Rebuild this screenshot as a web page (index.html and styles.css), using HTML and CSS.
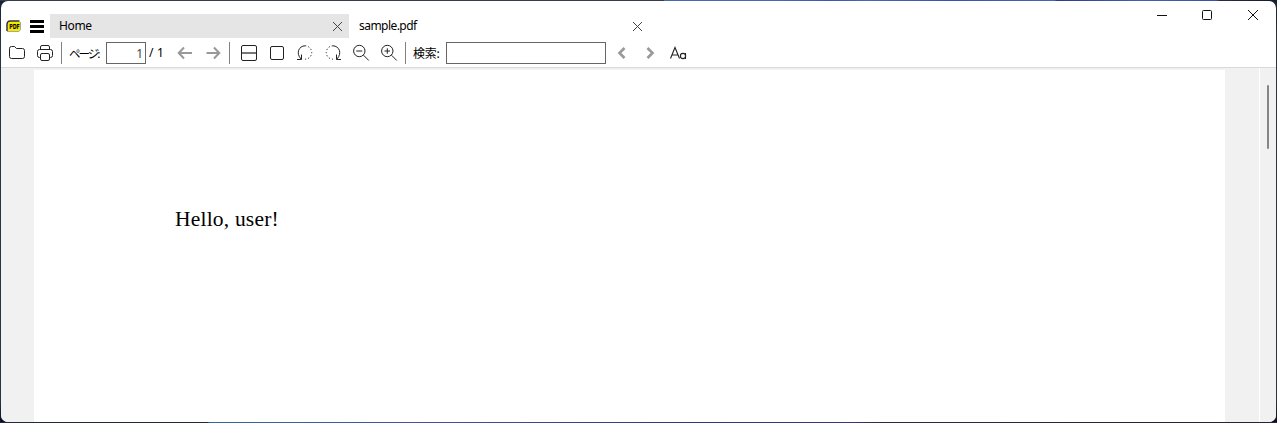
FILE: index.html
```html
<!DOCTYPE html>
<html lang="ja">
<head>
<meta charset="utf-8">
<title>sample.pdf</title>
<link rel="stylesheet" href="styles.css">
</head>
<body>
<div class="window">
  <header class="titlebar">
    <div class="app-icon"><svg width="16" height="14" viewBox="0 0 16 14"><path d="M3.500 2.500H13.500L14.500 3.500V10.500L13 12H1.500V5Z" fill="#f5e900" stroke="none"/><path d="M1 12V5Q1.500 2 4 2H13.500" stroke="#333328" stroke-width="1.500"/><path d="M14.500 3V10.500L13 12.500H1" stroke="#aaa890"/><text x="3.200" y="10" textLength="10.600" lengthAdjust="spacingAndGlyphs" class="logo-text">PDF</text></svg></div>
    <div class="menu"><i></i><i></i><i></i></div>
    <div class="tab tab-inactive"><span class="home">Home</span><svg class="close" width="11" height="11" viewBox="0 0 11 11"><path d="M1 1L10 10M10 1L1 10"/></svg></div>
    <div class="tab"><span class="sample">sample.pdf</span><svg class="close" width="11" height="11" viewBox="0 0 11 11"><path d="M1 1L10 10M10 1L1 10"/></svg></div>
    <div class="controls">
      <svg width="46" height="28" viewBox="0 0 46 28"><path d="M18 14.500H28"/></svg>
      <svg width="45" height="28" viewBox="0 0 45 28"><rect x="17.500" y="9.500" width="9" height="9" rx="1"/></svg>
      <svg width="46" height="28" viewBox="0 0 46 28"><path d="M18 9L28 19M28 9L18 19"/></svg>
    </div>
  </header>
  <nav class="toolbar">
    <svg class="btn" viewBox="0 0 28 30"><path d="M6.500 10.500Q6.500 8.500 8.500 8.500H11.500L13.500 10.500H19.500Q21.500 10.500 21.500 12.500V18.500Q21.500 20.500 19.500 20.500H8.500Q6.500 20.500 6.500 18.500Z"/></svg>
    <svg class="btn" viewBox="0 0 28 30"><path d="M9.500 11.500V9Q9.500 7.500 11 7.500H17Q18.500 7.500 18.500 9V11.500M9.500 19.500H8.500Q6.500 19.500 6.500 17.500V13.500Q6.500 11.500 8.500 11.500H19.500Q21.500 11.500 21.500 13.500V17.500Q21.500 19.500 19.500 19.500H18.500"/><rect x="9.500" y="15.500" width="9" height="7" rx="1.500"/></svg>
    <span class="sep"></span>
    <span class="label page-label">ページ:</span>
    <div class="field page-field">1</div>
    <span class="label total">/ 1</span>
    <svg class="btn nav" viewBox="0 0 28 30"><path d="M21 15H8M13 9.500L7.700 15L13 20.500"/></svg>
    <svg class="btn nav" viewBox="0 0 28 30"><path d="M7.500 15H20M15 9.500L20.300 15L15 20.500"/></svg>
    <span class="sep sep-view"></span>
    <svg class="btn" viewBox="0 0 28 30"><rect x="6.500" y="7.500" width="15" height="15" rx="1.500"/><path d="M7 15H21" class="divider"/></svg>
    <svg class="btn" viewBox="0 0 28 30"><rect x="7.500" y="8.500" width="13" height="13" rx="1.500"/></svg>
    <svg class="btn" viewBox="0 0 28 30"><path d="M14 7.800C8 8 4.500 15 10 21M6 21.500H10.500V16.500"/><path d="M14 7.800A6.700 6.700 0 0 1 14 21.200" class="dots"/></svg>
    <svg class="btn" viewBox="0 0 28 30"><path d="M14 7.800C20 8 23.500 15 18 21M22 21.500H17.500V16.500"/><path d="M14 7.800A6.700 6.700 0 0 0 14 21.200" class="dots"/></svg>
    <svg class="btn" viewBox="0 0 28 30"><circle cx="12.300" cy="13" r="5.700"/><path d="M16.500 17.200L21.800 22.500M9.300 13H15.300"/></svg>
    <svg class="btn" viewBox="0 0 28 30"><circle cx="12.300" cy="13" r="5.700"/><path d="M16.500 17.200L21.800 22.500M9.500 13H15M12.300 10.300V15.700"/></svg>
    <span class="sep sep-search"></span>
    <span class="label search-label">検索:</span>
    <div class="field search-field"></div>
    <svg class="btn chevron" viewBox="0 0 28 30"><path d="M16.500 10L11.500 15L16.500 20"/></svg>
    <svg class="btn chevron" viewBox="0 0 28 30"><path d="M11.500 10L16.500 15L11.500 20"/></svg>
    <svg class="btn case" viewBox="0 0 28 30"><path d="M6.500 20.500L11 9.500L15.500 20.500M8 17H14M21.500 15V21"/><circle cx="19" cy="18" r="2.600"/></svg>
  </nav>
  <main class="viewer">
    <div class="canvas"><article class="page"><p>Hello, user!</p></article></div>
    <div class="scrollbar"><div class="thumb"></div></div>
  </main>
</div>
</body>
</html>
```
FILE: styles.css
```css
* { box-sizing: border-box; }
body {
  margin: 0;
  height: 423px;
  padding: 1px;
  overflow: hidden;
  background:
    linear-gradient(90deg, #353c4c 0 664px, #4668ac 664px 780px, #3f56ae 830px, #4968ac 865px, #3754ac 950px, #4268ae 1055px, #2e3b83 1056px, #3f61ae 1140px, #3d5299 1216px, #292b43 1220px, #131b2c) 0 0 / 100% 1px no-repeat,
    linear-gradient(90deg, #222938 0 208px, #346795 209px, #42549b 410px, #353679 690px, #38377b 850px, #292a40 880px, #25233b) 0 100% / 100% 1px no-repeat,
    linear-gradient(#182236, #293345 10%, #293345 95%, #080c20);
  font: 12px "Noto Sans", "Noto Sans CJK JP", sans-serif;
  color: #000;
}
svg { display: block; flex: none; fill: none; stroke: #222; stroke-width: 1; overflow: visible; }
.window {
  height: 421px;
  width: 1275px;
  background: #fff;
  border-radius: 7px;
  overflow: hidden;
  display: flex;
  flex-direction: column;
}
.titlebar { height: 37px; display: flex; flex: none; }
.app-icon { width: 28px; padding: 18px 0 0 5px; }
.logo-text { font: bold 7px/1 "DejaVu Sans", sans-serif; fill: #000; stroke: none; }
.menu { width: 21px; padding: 19px 0 0 1px; display: flex; flex-direction: column; gap: 2px; }
.menu i { width: 14px; height: 3px; background: #000; }
.tab {
  width: 300px;
  height: 24px;
  margin-top: 13px;
  padding: 0 6px 0 10px;
  display: flex;
  align-items: center;
  justify-content: space-between;
}
.tab-inactive { width: 299px; padding-left: 9px; background: #e5e5e5; }
.tab span { line-height: 24px; }
.home { letter-spacing: -.35px; }
.sample { letter-spacing: -.55px; }
.close { stroke: #444; margin-top: 1px; }
.controls { display: flex; margin-left: auto; }
.controls svg { stroke: #111; }
.toolbar {
  height: 30px;
  flex: none;
  padding-left: 2px;
  display: flex;
  align-items: center;
  border-bottom: 1px solid #d9d9d9;
}
.btn { width: 28px; height: 30px; }
.nav { stroke: #999; stroke-width: 2; }
.dots { stroke-dasharray: 1.3 2; }
.divider { stroke: #777; stroke-width: 2; }
.chevron { stroke: #999; stroke-width: 2.6; }
.case { stroke-width: 1.1; }
.sep { width: 1px; height: 22px; margin: 0 7px 0 2px; background: #808080; }
.sep-view { margin: 0 5px 0 2px; }
.sep-search { margin: 0 7px 0 2px; }
.label { line-height: 22px; white-space: nowrap; }
.page-label { width: 37px; padding-top: 1px; font-family: "Noto Sans CJK JP", sans-serif; font-size: 11.5px; letter-spacing: -2px; }
.field { height: 22px; border: 1px solid #666; line-height: 21px; }
.page-field { width: 40px; padding-right: 2px; text-align: right; color: #444; }
.total { width: 25px; padding: 1px 0 0 3px; letter-spacing: .2px; }
.search-label { width: 33px; padding-top: 1px; font-family: "Noto Sans CJK JP", sans-serif; letter-spacing: -.2px; }
.search-field { width: 160px; margin-right: 2px; }
.viewer { flex: 1; display: flex; background: #f1f1f1; }
.canvas { width: 1259px; padding: 2px 34px 0 33px; border-right: 1px solid #fff; }
.page { height: 360px; background: #fff; padding: 134px 0 0 141px; }
.page p { margin: 0; font: 21.5px/30px "Liberation Serif", serif; letter-spacing: .2px; }
.scrollbar { flex: 1; padding: 17px 0 0 7px; }
.thumb { width: 2px; height: 64px; border-radius: 1px; background: #868686; }
```
